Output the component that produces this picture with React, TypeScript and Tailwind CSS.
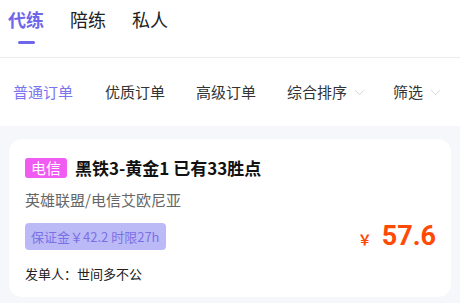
import { ChevronDown } from 'lucide-react';

const font = { fontFamily: '"Noto Sans CJK SC", "Noto Sans", sans-serif' };

const App = () => {
  return (
    <div className="w-[460px] h-[303px] bg-[#f6f7fb] overflow-hidden" style={font}>
      <div className="bg-white">
        <div className="h-[58px] flex items-start pl-2 border-b border-[#ececec]">
          <div className="flex flex-col items-center mt-[6px]">
            <span className="text-[18px] leading-[26px] font-bold text-[#6f66ea]">代练</span>
            <span className="mt-[9px] w-[17px] h-[3px] rounded-full bg-[#6f66ea]" />
          </div>
          <span className="ml-[26px] mt-[6px] text-[18px] leading-[26px] text-[#222]">陪练</span>
          <span className="ml-[26px] mt-[6px] text-[18px] leading-[26px] text-[#222]">私人</span>
        </div>
        <div className="h-[68px] flex items-center pl-[13px] text-[15px] text-[#333]">
          <span className="text-[#7b74ee]">普通订单</span>
          <span className="ml-[32px]">优质订单</span>
          <span className="ml-[31px]">高级订单</span>
          <span className="ml-[31px] flex items-center">
            综合排序
            <ChevronDown className="ml-[4px] w-[17px] h-[17px] text-[#cfcfcf]" strokeWidth={1.2} />
          </span>
          <span className="ml-[25px] flex items-center">
            筛选
            <ChevronDown className="ml-[4px] w-[17px] h-[17px] text-[#cfcfcf]" strokeWidth={1.2} />
          </span>
        </div>
      </div>
      <div className="px-[9px] pt-[13px]">
        <div className="bg-white rounded-[13px] h-[158px] pl-[16px] pr-[16px] pt-[19px]">
          <div className="flex items-center">
            <span className="w-[42px] h-[20px] rounded-[3px] bg-[#f05cf2] text-white text-[15px] leading-[20px] flex items-center justify-center">电信</span>
            <span className="ml-[8px] text-[17px] font-bold text-[#111] leading-[20px]">黑铁3-黄金1 已有33胜点</span>
          </div>
          <div className="mt-[11px] text-[15px] leading-[22px] text-[#666]">英雄联盟/电信艾欧尼亚</div>
          <div className="flex items-end justify-between mt-[12px]">
            <span className="h-[27px] px-[6px] rounded-[4px] bg-[#bcbaf6] text-[#7a70e6] text-[13px] leading-[27px]">保证金￥42.2 时限27h</span>
            <span className="flex items-baseline text-[#ff4a06] font-bold mr-[-1px]">
              <span className="text-[14px] mr-[10px]">￥</span>
              <span className="text-[27px] leading-[27px]" style={{ fontFamily: 'Roboto, sans-serif' }}>57.6</span>
            </span>
          </div>
          <div className="mt-[15px] text-[13px] leading-[18px] text-[#222]">发单人：世间多不公</div>
        </div>
      </div>
    </div>
  );
};

export default App;
